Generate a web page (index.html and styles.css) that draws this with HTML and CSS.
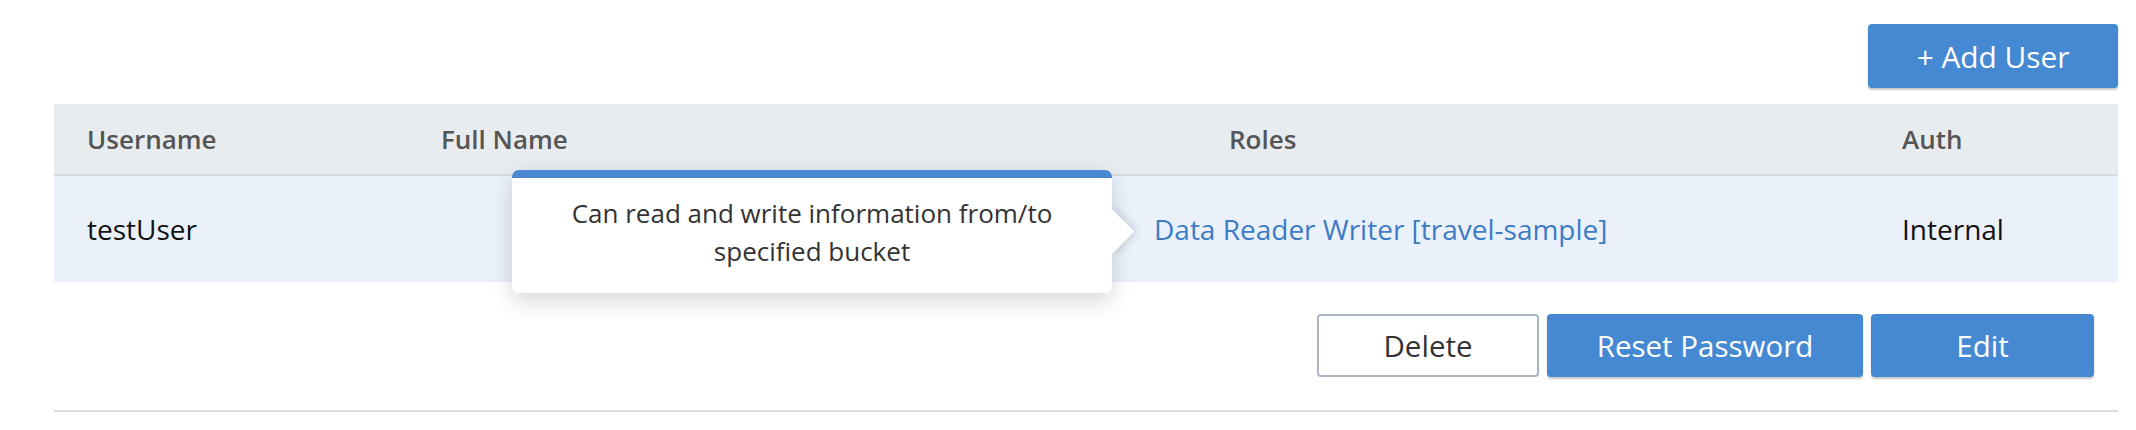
FILE: index.html
```html
<!DOCTYPE html>
<html lang="en">
<head>
<meta charset="utf-8">
<title>Users</title>
<link rel="stylesheet" href="styles.css">
</head>
<body>
<div class="page">
  <div class="toolbar">
    <button class="btn btn-primary btn-add">+ Add User</button>
  </div>
  <div class="users-table">
    <div class="thead">
      <div class="cell cell-user">Username</div>
      <div class="cell">Full Name</div>
      <div class="cell cell-roles-head">Roles</div>
      <div class="cell">Auth</div>
    </div>
    <div class="trow">
      <div class="cell cell-user">testUser</div>
      <div class="cell"></div>
      <div class="cell"><span class="role-link">Data Reader Writer [travel-sample]</span></div>
      <div class="cell">Internal</div>
    </div>
    <div class="tooltip">
      <div class="tooltip-arrow"></div>
      <div class="tooltip-body">Can read and write information from/to specified bucket</div>
    </div>
  </div>
  <div class="actions">
    <button class="btn btn-outline btn-delete">Delete</button>
    <button class="btn btn-primary btn-reset">Reset Password</button>
    <button class="btn btn-primary btn-edit">Edit</button>
  </div>
  <div class="divider"></div>
</div>
</body>
</html>
```
FILE: styles.css
```css
html, body {
  margin: 0;
  background: #ffffff;
}
body {
  font-family: "Open Sans", "Liberation Sans", sans-serif;
}
.page {
  padding: 24px 18px 0 54px;
}
.toolbar {
  display: flex;
  justify-content: flex-end;
  margin-bottom: 16px;
}
.btn {
  font-family: "Open Sans", "Liberation Sans", sans-serif;
  font-size: 29.5px;
  font-weight: 400;
  border-radius: 4px;
  cursor: pointer;
  display: flex;
  align-items: center;
  justify-content: center;
  padding: 0;
  box-sizing: border-box;
}
.btn-primary {
  background: #4689d3;
  color: #ffffff;
  border: none;
  box-shadow: 0 2px 2px rgba(0, 0, 0, 0.22);
}
.btn-outline {
  background: #ffffff;
  color: #333333;
  border: 2px solid #a9b5c3;
}
.btn-add {
  width: 250px;
  height: 64px;
  font-size: 29.8px;
}
.users-table {
  position: relative;
}
.thead, .trow {
  display: grid;
  grid-template-columns: 387px 713px 748px 1fr;
  align-items: center;
}
.thead {
  height: 70px;
  background: #e9ecef;
  border-bottom: 2px solid #d9dcdf;
  color: #555555;
  font-weight: 600;
  font-size: 26px;
}
.trow {
  height: 106px;
  background: #eaf1fa;
  color: #111111;
  font-size: 28px;
}
.cell-user {
  padding-left: 33px;
}
.cell-roles-head {
  padding-left: 75px;
}
.role-link {
  color: #3d7cc4;
}
.tooltip {
  position: absolute;
  left: 458px;
  top: 66px;
  width: 600px;
  height: 123px;
  box-sizing: border-box;
  border-top: 8px solid #4a88d2;
  border-radius: 7px;
  background: #ffffff;
  box-shadow: 0 8px 22px rgba(0, 0, 0, 0.16);
  z-index: 5;
}
.tooltip-arrow {
  position: absolute;
  right: -16px;
  top: 38px;
  width: 31px;
  height: 31px;
  background: #ffffff;
  transform: rotate(45deg);
  box-shadow: 2px -2px 8px rgba(0, 0, 0, 0.14);
  z-index: -1;
}
.tooltip-body {
  position: relative;
  height: 100%;
  box-sizing: border-box;
  background: #ffffff;
  border-radius: 0 0 7px 7px;
  padding: 16px 40px 0;
  text-align: center;
  font-size: 26px;
  line-height: 38px;
  color: #333333;
}
.actions {
  display: flex;
  justify-content: flex-end;
  gap: 8px;
  padding-right: 24px;
  margin-top: 32px;
}
.actions .btn {
  height: 63px;
}
.btn-delete { width: 222px; }
.btn-reset { width: 316px; }
.btn-edit { width: 223px; }
.divider {
  margin-top: 33px;
  height: 2px;
  background: #dcdcdc;
}
```
